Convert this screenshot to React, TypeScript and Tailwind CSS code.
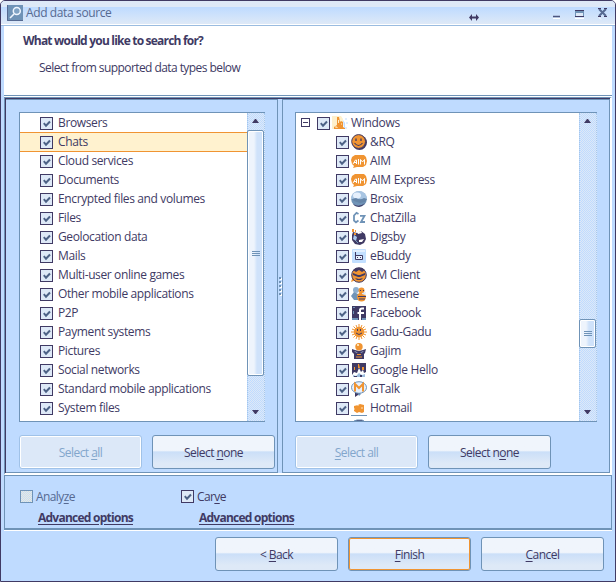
import React from "react";

const leftItems = [
  "Browsers", "Chats", "Cloud services", "Documents", "Encrypted files and volumes", "Files",
  "Geolocation data", "Mails", "Multi-user online games", "Other mobile applications", "P2P",
  "Payment systems", "Pictures", "Social networks", "Standard mobile applications", "System files",
];

const D = "#403a64";
const M = "#6f93b7";
const O = "#f09432";
const L = "#bfdbff";

const icons: Record<string, React.ReactNode> = {
  windows: (
    <>
      <path d="M0 1h9l2 3v10H0z" fill="#fef0cc" />
      <path d="M5 2h2l1 5 1-1 2 1v5l2 1v1H2v-2l3-2z" fill={O} />
      <path d="M6.5 5v3M3 12h2v1M9 9h1" stroke="#fef0cc" fill="none" />
      <path d="M11 5l2 3v5h-1z" fill={L} />
      <path d="M14 3v2M15 7v2M14 12v2" stroke={L} />
    </>
  ),
  rq: (
    <>
      <circle cx="8.5" cy="8.5" r="7.5" fill={D} />
      <circle cx="7.6" cy="7.5" r="6.9" fill={O} stroke={D} />
      <path d="M5 4.5v2.5M10 4.5v2.5" stroke={D} strokeWidth="1.3" />
      <path d="M3.5 9q4 5 8 0" stroke={D} fill="none" strokeWidth="1.1" />
    </>
  ),
  aim: (
    <>
      <path d="M4 2h9l2 2 1 4-1 4-3 2H6l-4 1 1-2-2-2-1-4 1-3z" fill={O} />
      <path d="M2 11l2.5-4h1v4M3 9.5h2M7.5 6v5.5M9.5 11.5V6.5l2 2.5 2-2.5v5" stroke="white" fill="none" />
    </>
  ),
  brosix: (
    <>
      <circle cx="8" cy="8" r="7.8" fill={M} />
      <path d="M0 8a8 8 0 0116 0z" fill="#a8c5e2" />
      <ellipse cx="6" cy="4.5" rx="4" ry="3" fill="#e6f0fc" />
      <path d="M1 8l4-1 4 2 4-2 3 1-2 3-5 1-6-2z" fill="#6585a8" />
      <path d="M2 13q6 4 12-1l-3 3-3 1-4-1z" fill={D} />
    </>
  ),
  cz: (
    <path d="M7.5 4L5.5 2.8 3 5.5v5L5 12.3l2.5-1.8M9 5.8h4.5L10 12h4" stroke={M} fill="none" strokeWidth="1.8" />
  ),
  digsby: (
    <>
      <path d="M2 3l4 1 4-2 4 3 1 5-2 4-4 2-5-1-3-4V6z" fill={D} />
      <path d="M1 0h2v3H1zM4 1h1v2H4zM3 4h2v2H3z" fill={O} />
      <path d="M3 6l3 2-1 4-3-2z" fill="#a8c8ec" />
      <path d="M6 3l4-1 1 2-4 1zM8 11l5-1-2 3H8z" fill="white" />
      <path d="M5 12l2 2" stroke={M} />
    </>
  ),
  ebuddy: (
    <>
      <rect x="1" y="1" width="14" height="14" rx="1" fill="#c2dfff" />
      <path d="M2 2h12v2H2z" fill="#e2efff" />
      <path d="M4.5 4v7.5h7V7.5h-7" fill="#e9f3ff" stroke={D} />
      <path d="M6 9h1v1H6zM9 9h1v1H9z" fill={D} />
    </>
  ),
  em: (
    <>
      <path d="M2 9l-2 6 5-2z" fill={O} />
      <circle cx="8" cy="8" r="7.3" fill={O} stroke={D} />
      <path d="M2 3l3-2h6l3 2-3 2-3-2-3 2z" fill={D} />
      <path d="M2 6l5 2h2l5-2v2l-5 2H7L2 8zM4 11l4 1 4-1-2 2H6z" fill={D} />
    </>
  ),
  emesene: (
    <>
      <circle cx="5" cy="4" r="3" fill="#8caecf" />
      <path d="M0 10l3-4 6 3v5H3z" fill={M} />
      <circle cx="10.5" cy="4.5" r="3" fill={O} />
      <circle cx="10.5" cy="11" r="4.5" fill={O} />
      <path d="M7 10.5h8M8 13h6" stroke={D} />
      <path d="M11 7l4-1-1 3-3-1z" fill="#d5e7fb" />
      <path d="M9 4h1v1H9zM12 4h1v1h-1z" fill={D} />
    </>
  ),
  facebook: (
    <>
      <rect x="1" y="1" width="14" height="14" fill={D} />
      <path d="M9 15V5Q9 3.5 11 3.5h2M6.5 8h6.5" stroke="white" strokeWidth="2" fill="none" />
      <path d="M1 13h6v2H1zM11 13h4v2h-4z" fill={M} />
      <path d="M2 2h2v1H2zM2 6h1v3H2z" fill={M} />
    </>
  ),
  gadu: (
    <>
      <circle cx="8" cy="8" r="5.2" fill={O} />
      <path d="M8 0v16M0 8h16M2.5 2.5l11 11M13.5 2.5l-11 11M5 1l6 14M11 1L5 15M1 5l14 6M15 5L1 11" stroke={O} strokeWidth="1" />
      <path d="M6.5 5v2M9.5 5v2" stroke={D} />
      <path d="M5 9q3 3 6 0" fill="none" stroke={D} />
    </>
  ),
  gajim: (
    <>
      <circle cx="8" cy="3.7" r="3.7" fill={O} />
      <path d="M6 1h2v2H6z" fill="#ffe1ae" />
      <path d="M1 6l3 1 4 1 4-1 3-1-1 4-1 1v5H3v-5L1 9z" fill={D} />
      <path d="M3 8l4 1.5H5zM9 9.5L13 8l-2 1.5z" fill="#c4def9" />
      <path d="M6 11.5h4M5 14h6" stroke={O} />
    </>
  ),
  hello: (
    <>
      <rect x="1" y="1" width="14" height="14" fill={D} />
      <path d="M7 2h1l1 4H7zM3 5h1v3H3zM11 5h2v3h-2z" fill={O} />
      <path d="M1 13l2-3 3 1 2-5 2 4 2-2 1 3 2-1v5H1z" fill="white" />
      <path d="M2 13l3 1 3-3 3 2 3-1v3H2z" fill="#9dbddd" />
      <path d="M3 14h3v1H3zM9 13h2v2H9z" fill={D} />
    </>
  ),
  gtalk: (
    <>
      <path d="M4 11v5l6-4z" fill={D} />
      <ellipse cx="8" cy="6.5" rx="7.5" ry="5.8" fill="#e7f1fe" stroke={M} />
      <path d="M4 10.5V3l4 4 4-4v7.5" fill="none" stroke={O} strokeWidth="2" />
      <path d="M7 13h3l-2 2" fill={M} />
    </>
  ),
  hotmail: (
    <>
      <path d="M3 6l4-1 2-1 4 1v7l-2 1-3-1-2 1-3-2z" fill={O} />
      <path d="M7 5v1M3 9h1M10 8h2" stroke="#ffe2b8" />
      <path d="M0 15.5h16" stroke={M} />
    </>
  ),
  next: <path d="M3 2l3-1h5l2 1v5H3z" fill={D} stroke={M} />,
};

const rightItems = [
  ["rq", "&RQ"], ["aim", "AIM"], ["aim", "AIM Express"], ["brosix", "Brosix"], ["cz", "ChatZilla"],
  ["digsby", "Digsby"], ["ebuddy", "eBuddy"], ["em", "eM Client"], ["emesene", "Emesene"],
  ["facebook", "Facebook"], ["gadu", "Gadu-Gadu"], ["gajim", "Gajim"], ["hello", "Google Hello"],
  ["gtalk", "GTalk"], ["hotmail", "Hotmail"], ["next", ""],
];

function Icon({ name }: { name: string }) {
  return <svg className="block h-4 w-4 shrink-0" viewBox="0 0 16 16">{icons[name]}</svg>;
}

function Check({ off = false }: { off?: boolean }) {
  return off ? (
    <span className="block h-[13px] w-[13px] shrink-0 border border-[#6f93b7] bg-[#dfe9e8] bg-[repeating-conic-gradient(#bfdbff_0_25%,#f1ecd5_0_50%)] bg-[length:2px_2px]" />
  ) : (
    <span className="block h-[13px] w-[13px] shrink-0 border border-[#403a64] bg-[#dee9f7]">
      <svg className="block h-[11px] w-[11px]" viewBox="0 0 11 11">
        <path d="M2.8 5.2l2.2 2.6 4-4.3" fill="none" stroke="#4d6286" strokeWidth="2" />
      </svg>
    </span>
  );
}

function Scroll({ before, thumb }: { before: string; thumb: string }) {
  return (
    <div className="relative flex w-[18px] shrink-0 flex-col border-x border-dotted border-[#a5c6ea] bg-[#cfe2fb] bg-[repeating-conic-gradient(#bfdbff_0_25%,#dee9f7_0_50%)] bg-[length:2px_2px]">
      <svg className="absolute left-[4px] top-[6px] h-1 w-[7px]" viewBox="0 0 7 4"><path d="M0 4l3-4h1l3 4z" fill={D} /></svg>
      <div className={before} />
      <div className={"-ml-px flex w-[17px] shrink-0 flex-col items-center justify-center gap-px rounded-[2px] border border-[#6f93b7] bg-linear-to-r from-[#eef4fc] from-40% to-[#cfe2fa] to-60% shadow-[inset_0_0_0_1px_white] " + thumb}>
        <span className="h-px w-2 bg-[#6f93b7]" /><span className="h-px w-2 bg-[#6f93b7]" /><span className="h-px w-2 bg-[#6f93b7]" />
      </div>
      <svg className="absolute bottom-[7px] left-[4px] h-1 w-[7px]" viewBox="0 0 7 4"><path d="M0 0l3 4h1l3-4z" fill={D} /></svg>
    </div>
  );
}

function Button({ pre, u, post, kind = "normal" }: { pre: string; u: string; post: string; kind?: string }) {
  const look =
    kind === "disabled"
      ? "border-[#a0c2e8] bg-[#dce8f8] text-[#82a6cc] shadow-[inset_0_0_0_1px_white]"
      : kind === "focus"
        ? "border-[#6f93b7] bg-linear-to-b from-[#f0f5fc] from-45% via-[#cbdff8] via-50% to-[#dee9f7] to-85% shadow-[inset_0_0_0_1px_#f09432]"
        : "border-[#6f93b7] bg-linear-to-b from-[#f0f5fc] from-45% via-[#cbdff8] via-50% to-[#dee9f7] to-85%";
  return (
    <button className={"h-[34px] w-[123px] shrink-0 rounded-[3px] border pt-px text-center leading-4 tracking-[-0.55px] " + look}>
      {pre}<span className="underline underline-offset-2">{u}</span>{post}
    </button>
  );
}

export default function App() {
  return (
    <div className="flex h-[582px] w-[616px] flex-col overflow-hidden rounded-t-[5px] border border-[#403a64] bg-[#bfdbff] font-['Open_Sans','Noto_Sans',sans-serif] text-[12px] tracking-[-0.37px] text-[#403a64]">
      <div className="flex h-6 shrink-0 items-center border-b border-white bg-linear-to-b from-[#dee9f7] from-24% via-[#bfdbff] via-28% to-[#dee9f7] pl-[6px] pr-[8px] text-[#566a92]">
        <svg className="mr-[3px] mt-[1px] h-4 w-4" viewBox="0 0 16 16">
          <rect width="16" height="16" fill={M} /><path d="M.5 0v15.5H16" fill="none" stroke="#566a92" />
          <circle cx="9.8" cy="6" r="3.5" fill="#7fa2c4" stroke="#eef5fe" strokeWidth="1.5" />
          <path d="M7 9l-4 4" stroke="#eef5fe" strokeWidth="1.6" />
        </svg>
        <span className="flex-1 text-[12px] leading-4 tracking-[-0.38px]">Add data source</span>
        <svg className="mr-[72px] mt-[9px] h-[7px] w-[10px]" viewBox="0 0 10 7"><path d="M0 3.5L3 0v2.5h4V0l3 3.5L7 7V4.5H3V7z" fill={D} /></svg>
        <svg className="h-[14px] w-[56px]" viewBox="0 0 56 14">
          <path d="M2 12.5h7M24 12.5h9M48 11.5l2 2" stroke="white" />
          <path d="M2 10.5h7" stroke="#4d557f" strokeWidth="1.5" />
          <path d="M24.5 4.5h8v6h-8z" fill="#dee9f7" stroke={M} />
          <path d="M24 4.5h9M24 10.5h9" stroke={D} /><path d="M25 6h7" stroke={M} strokeWidth="2" />
          <path d="M48 3l7 7M55 3l-7 7" stroke="#566a92" strokeWidth="2" />
          <path d="M47 2.5h3M53 2.5h3M47 10.5h3M53 10.5h3" stroke={D} />
        </svg>
      </div>
      <div className="h-px shrink-0 bg-[#9abce0]" />
      <div className="mx-[3px] flex flex-1 flex-col">
        <header className="h-[70px] shrink-0 border-b border-[#6f93b7] bg-white">
          <h1 className="ml-[19px] pt-[7px] text-[12px] font-bold leading-4 tracking-[-0.8px]">What would you like to search for?</h1>
          <p className="ml-[35px] mt-[11px] leading-4 tracking-[-0.57px]">Select from supported data types below</p>
        </header>
        <div className="h-px shrink-0 bg-white" />
        <main className="h-[378px] shrink-0 border-b-2 border-l border-r-2 border-t border-b-white border-l-[#6f93b7] border-r-white border-t-[#6f93b7]">
          <div className="flex h-[375px] border-l border-t border-[#403a64]">
            <section className="h-[374px] w-[272px] shrink-0 border-b border-r border-t border-[#6f93b7] pl-[13px] pt-3">
              <div className="flex h-[310px] w-[246px] border-y border-l border-[#6f93b7]">
                <ul className="h-full flex-1 overflow-hidden bg-white pt-px">
                  {leftItems.map((t) => (
                    <li key={t} className={"flex h-[19px] items-start pl-5 pt-[3px] " + (t === "Chats" ? "bg-[#fff2cf] shadow-[0_-1px_0_#f09432,inset_0_-1px_0_#f09432]" : "")}>
                      <Check /><span className="-mt-[2px] ml-[5px] whitespace-nowrap leading-4">{t}</span>
                    </li>
                  ))}
                </ul>
                <Scroll before="h-[17px] shrink-0" thumb="h-[246px]" />
              </div>
              <div className="mt-[13px] flex gap-[10px]">
                <Button pre="Select " u="a" post="ll" kind="disabled" />
                <Button pre="Select " u="n" post="one" />
              </div>
            </section>
            <div className="flex w-1 shrink-0 flex-col items-center justify-center gap-[2px]">
              {[0, 1, 2, 3, 4].map((n) => <span key={n} className="h-[2px] w-[2px] bg-[#6f93b7] shadow-[1px_1px_0_white]" />)}
            </div>
            <section className="h-[374px] w-[328px] shrink-0 border border-[#6f93b7] pl-3 pt-3">
              <div className="flex h-[310px] w-[302px] border-y border-l border-[#6f93b7] tracking-[-0.3px]">
                <ul className="h-full flex-1 overflow-hidden bg-white pt-px">
                  <li className="flex h-[19px] items-start pl-[5px] pt-[3px]">
                    <span className="mr-[7px] mt-px flex h-[9px] w-[9px] items-center justify-center border border-[#403a64]"><span className="h-px w-[5px] bg-[#403a64]" /></span>
                    <Check /><span className="-mt-[2px] ml-[2px]"><Icon name="windows" /></span>
                    <span className="-mt-[2px] ml-[3px] leading-4">Windows</span>
                  </li>
                  {rightItems.map(([icon, t], i) => (
                    <li key={i} className="flex h-[19px] items-start pl-10 pt-[3px]">
                      <Check /><span className="-mt-[2px] ml-[2px]"><Icon name={icon} /></span>
                      <span className="-mt-[2px] ml-[3px] whitespace-nowrap leading-4">{t}</span>
                    </li>
                  ))}
                </ul>
                <Scroll before="h-[206px] shrink-0" thumb="h-[29px]" />
              </div>
              <div className="mt-[13px] flex gap-[10px]">
                <Button pre="" u="S" post="elect all" kind="disabled" />
                <Button pre="Select n" u="o" post="ne" />
              </div>
            </section>
          </div>
        </main>
        <section className="flex h-[55px] shrink-0 border border-b-2 border-[#6f93b7] pl-[15px] pt-[14px] shadow-[0_1px_0_white]">
          {["Analyze", "Carve"].map((t) => (
            <div key={t} className="w-[161px]">
              <div className="flex h-[13px] items-center">
                <Check off={t === "Analyze"} />
                <span className={"ml-[3px] leading-4 tracking-[-0.6px] " + (t === "Analyze" ? "text-[#566a92]" : "")}>
                  {t === "Analyze" ? "Analy" : "Car"}<span className="underline underline-offset-2">{t === "Analyze" ? "z" : "v"}</span>e
                </span>
              </div>
              <a className="ml-[18px] mt-[7px] block w-fit text-[12px] font-bold leading-4 tracking-[-0.75px] underline underline-offset-2">Advanced options</a>
            </div>
          ))}
        </section>
        <footer className="flex justify-end gap-[10px] pr-2 pt-[7px]">
          <Button pre="< " u="B" post="ack" />
          <Button pre="" u="F" post="inish" kind="focus" />
          <Button pre="" u="C" post="ancel" />
        </footer>
      </div>
    </div>
  );
}
